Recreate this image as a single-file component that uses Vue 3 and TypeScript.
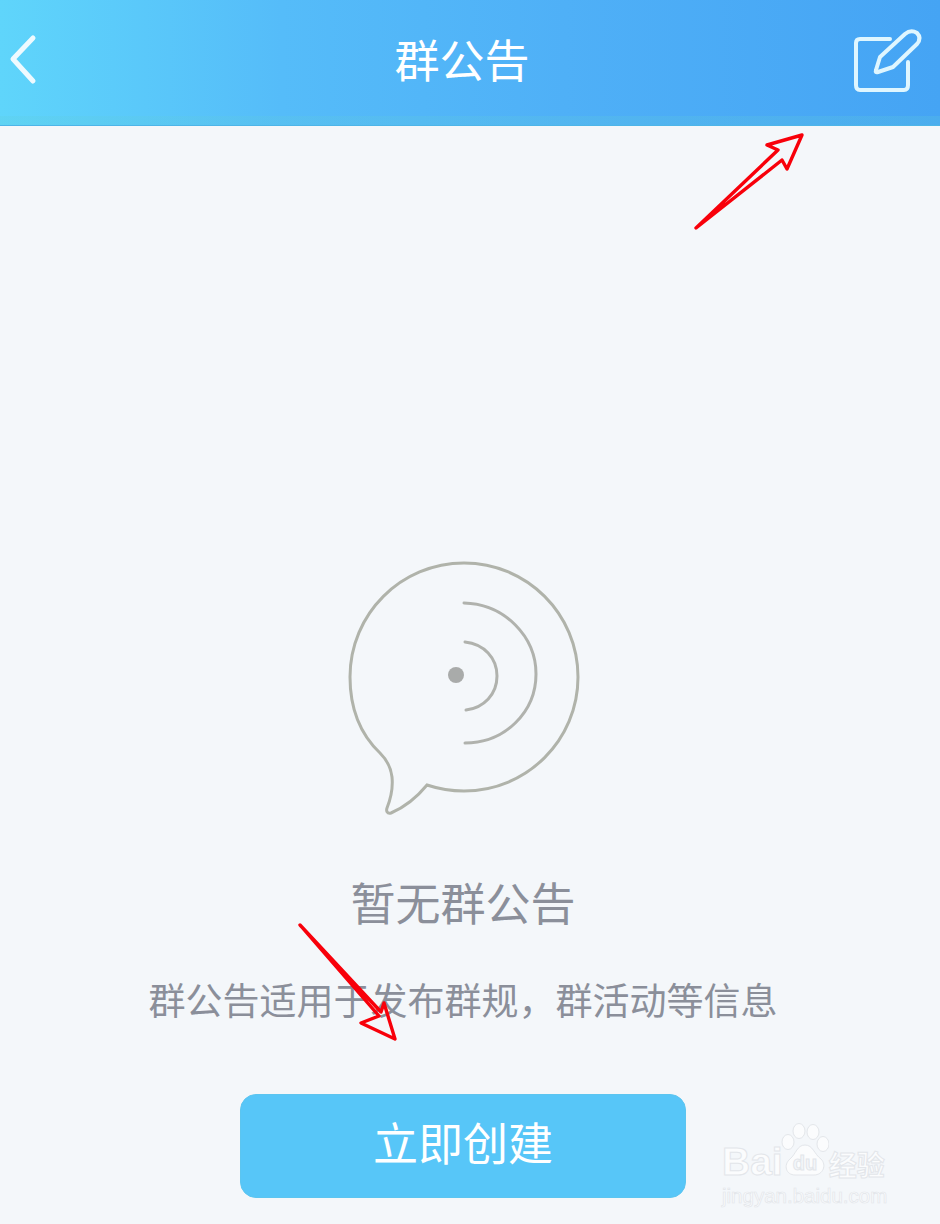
<script setup lang="ts">
const title: string = '群公告'
</script>

<template>
  <div class="page">
    <header class="bar">
      <svg class="back" viewBox="0 0 30 54" aria-hidden="true">
        <path d="M25 4 L5 25 L25 47" />
      </svg>
      <h1 class="title">{{ title }}</h1>
      <svg class="edit" viewBox="850 26 76 70" aria-hidden="true">
        <path d="M890 39 H860 Q856 39 856 43 V85 Q856 90 860 90 H904 Q908 90 908 85 V62" />
        <path d="M878 72 Q875 73 876 70 L880 57 L905 34 Q911 29 917 33 Q922 38 917 44 L893 67 Z" />
      </svg>
    </header>

    <main class="empty">
      <svg class="speech" viewBox="348 560 232 256" aria-hidden="true">
        <path class="ring" d="M380 753 C359 733 350 706 350 677 C350 614 401 563 464 563 C527 563 578 614 578 677 C578 740 527 791 464 791 C451 791 439 789 427 785 C418 796 405 807 391 813 C387 814 386 811 387 808 C391 798 393 787 392 777 C391 768 387 760 380 753 Z" />
        <path class="ring wave" d="M465 642 C484 644 497 658 497 676 C497 694 484 708 466 710" />
        <path class="ring wave" d="M464 603 C505 604 536 637 536 674 C536 712 505 743 465 743" />
        <circle class="dot" cx="456" cy="675" r="8" />
      </svg>
      <h2 class="heading">暂无群公告</h2>
      <p class="desc">群公告适用于发布群规，群活动等信息</p>
      <button class="create" type="button">立即创建</button>
    </main>

    <svg class="marks" viewBox="0 0 940 1224" aria-hidden="true">
      <path d="M696 228 L778 150 L767 145 L802 135 L787 169 L782 160 Z" />
      <path d="M300 925 L379 1016 L361 1023 L395 1039 L384 1003 L381 1012 Z" />
    </svg>

    <div class="watermark">
      <div class="brand">
        <span class="bai">Bai</span>
        <svg class="paw" viewBox="0 0 48 54" aria-hidden="true">
          <ellipse cx="7" cy="19" rx="6" ry="7.5" />
          <ellipse cx="18" cy="8" rx="6" ry="7.5" />
          <ellipse cx="32" cy="9" rx="6" ry="7.5" />
          <ellipse cx="42" cy="21" rx="6" ry="7.5" />
          <path d="M24 22 C32 22 33 31 40 36 C46 42 42 52 33 52 H14 C5 52 2 42 9 36 C15 31 16 22 24 22 Z" />
          <text x="24" y="47" text-anchor="middle">du</text>
        </svg>
        <span class="jy">经验</span>
      </div>
      <div class="url">jingyan.baidu.com</div>
    </div>
  </div>
</template>

<style>
html, body { margin: 0; background: #f4f7fa; }
</style>

<style scoped>
.page {
  position: relative;
  width: 940px;
  height: 1224px;
  overflow: hidden;
  background: #f4f7fa;
  font-family: "Noto Sans CJK SC", "Liberation Sans", sans-serif;
}
.bar {
  height: 126px;
  box-sizing: border-box;
  display: flex;
  align-items: center;
  justify-content: space-between;
  padding: 0 18px 8px 8px;
  background:
    linear-gradient(180deg, transparent 116px, rgba(96, 205, 215, 0.22) 116px),
    linear-gradient(90deg, #5fd5fb 0%, #55bcf9 30%, #4fb0f7 60%, #45a4f4 100%);
  border-bottom: 1px solid #4db5e8;
}
.back { width: 30px; height: 54px; margin-top: 4px; fill: none; stroke: #eefaff; stroke-width: 5; stroke-linecap: round; stroke-linejoin: round; }
.title { margin: 0 0 0 36px; font-size: 45px; font-weight: 400; line-height: 60px; color: #fff; }
.edit { width: 76px; height: 70px; margin-right: -4px; margin-top: 4px; fill: none; stroke: #dff6ff; stroke-width: 4; stroke-linecap: round; stroke-linejoin: round; }
.empty {
  display: flex;
  flex-direction: column;
  align-items: center;
  padding: 434px 14px 0 0;
}
.speech { width: 232px; height: 256px; margin-left: 2px; fill: none; }
.ring { fill: none; stroke: #b0b3aa; stroke-width: 3; }
.wave { stroke-linecap: round; stroke: #b0b2ad; }
.dot { fill: #a9abaa; }
.heading { margin: 53px 0 0; font-size: 45px; font-weight: 400; line-height: 66px; color: #8b8f9a; }
.desc { margin: 37px 0 0; font-size: 37px; line-height: 54px; color: #8b8f9a; }
.create {
  margin-top: 68px;
  width: 446px;
  height: 104px;
  border: 1px solid #5cc5f0;
  border-radius: 16px;
  background: #57c6f8;
  color: #fff;
  font: 400 45px/1 "Noto Sans CJK SC", "Liberation Sans", sans-serif;
  padding: 0 0 9px;
}
.marks { position: absolute; inset: 0; width: 940px; height: 1224px; fill: none; stroke: #f8000a; stroke-width: 3.4; stroke-linejoin: round; }
.watermark { position: absolute; left: 722px; top: 1122px; width: 170px; color: #fbfcfd; font-family: "Liberation Sans", sans-serif; }
.brand { display: flex; align-items: flex-end; height: 55px; }
.bai { font-size: 39px; font-weight: 700; line-height: 40px; letter-spacing: 0; margin-bottom: -5px; -webkit-text-stroke: 1px #e3e6ea; }
.paw { width: 48px; height: 54px; margin-left: -2px; fill: #fbfcfd; stroke: #e3e6ea; stroke-width: 1; }
.paw text { font: 700 20px "Liberation Sans", sans-serif; fill: #f4f7fa; }
.jy { font: 700 28px/34px "Noto Sans CJK SC", sans-serif; margin-bottom: -4px; -webkit-text-stroke: 1px #e3e6ea; }
.url { font-size: 20.5px; line-height: 28px; margin-top: 5px; white-space: nowrap; -webkit-text-stroke: 0.7px #e3e6ea; }
</style>
